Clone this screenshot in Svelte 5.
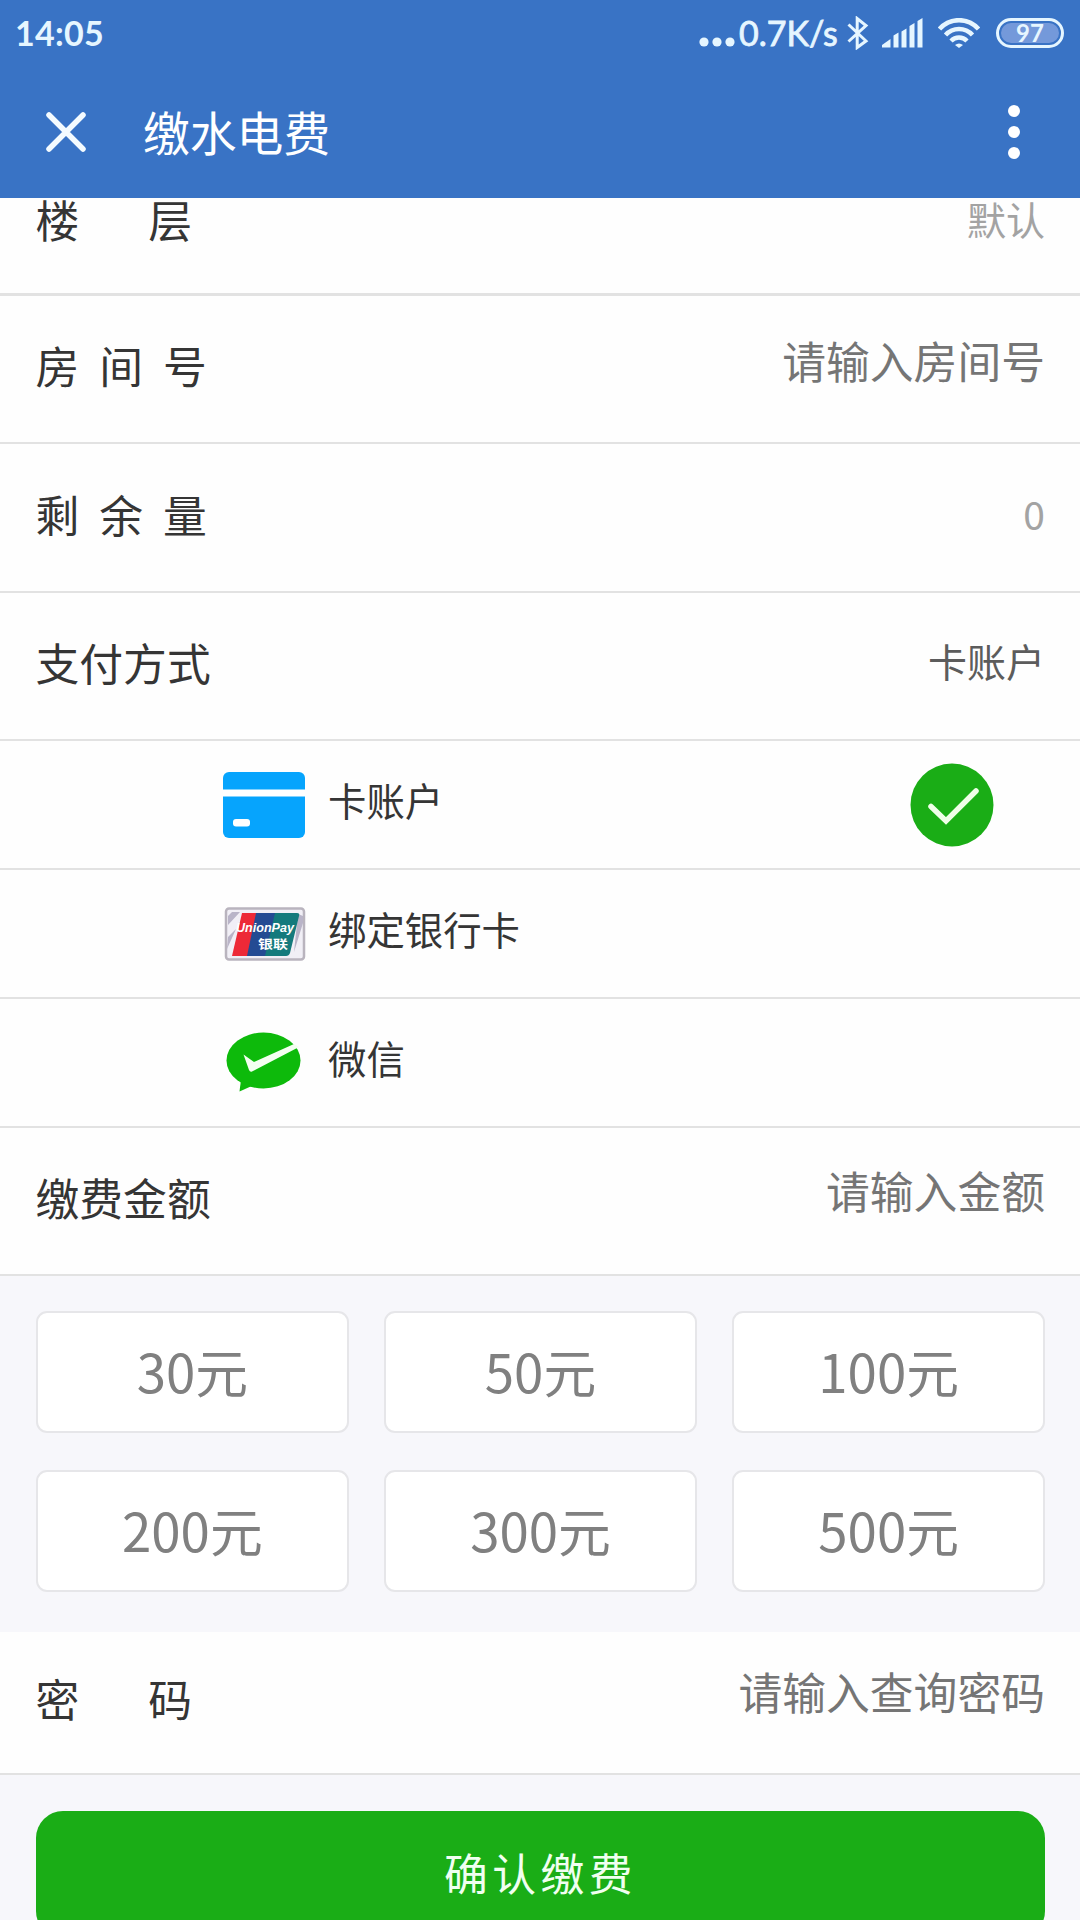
<script>
  const amounts = [30, 50, 100, 200, 300, 500];
</script>

<div class="screen">
  <header>
    <div class="status">
      <span class="time">14:05</span>
      <span class="net">
        <svg class="dots" width="36" height="30" viewBox="0 0 36 30" fill="currentColor">
          <circle cx="5" cy="24" r="4.6" /><circle cx="18" cy="24" r="4.6" /><circle cx="31" cy="24" r="4.6" />
        </svg>
        <span class="speed">0.7K/s</span>
        <svg class="bt" width="22" height="34" viewBox="0 0 22 34" fill="none" stroke="currentColor" stroke-width="3">
          <path d="M1.500 8.500 19 25 10.200 31.500V2.500L19 9.500 1.500 25.500" />
        </svg>
        <svg class="signal" width="41" height="30" viewBox="0 0 41 30" fill="currentColor">
          <path d="M0 29.500V27L8.500 21v8.500z" />
          <path d="M11.500 17.500l5-3v15h-5zM19.500 13.500l5-3v19h-5zM27.500 8l5-3v24.500h-5zM35.500 3l5-3v29.500h-5z" />
        </svg>
        <svg class="wifi" width="42" height="30" viewBox="0 0 42 30" fill="none" stroke="currentColor" stroke-width="4.500">
          <path d="M1.500 11C12-.8 30-.8 40.500 11M7.500 17C15 9 27 9 34.500 17M13 23C17.500 18.400 24.500 18.400 29 23" />
          <path d="M17 27Q21 23.800 25 27L21 30z" fill="currentColor" stroke="none" />
        </svg>
        <span class="battery"><span>97</span></span>
      </span>
    </div>
    <div class="titlebar">
      <svg width="40" height="40" viewBox="0 0 40 40" stroke="#f4fbff" stroke-width="5.500" stroke-linecap="round">
        <path d="M3 3 37 37M37 3 3 37" />
      </svg>
      <h1>缴水电费</h1>
      <svg class="more" width="14" height="54" viewBox="0 0 14 54" fill="#fff">
        <circle cx="7" cy="6" r="6" /><circle cx="7" cy="27" r="6" /><circle cx="7" cy="48" r="6" />
      </svg>
    </div>
  </header>

  <div class="row floor">
    <span class="label two"><i>楼</i><i>层</i></span>
    <span class="value light">默认</span>
  </div>
  <div class="row">
    <span class="label three">房间号</span>
    <span class="value hint">请输入房间号</span>
  </div>
  <div class="row">
    <span class="label three">剩余量</span>
    <span class="value light">0</span>
  </div>
  <div class="row">
    <span class="label">支付方式</span>
    <span class="value chosen">卡账户</span>
  </div>

  <div class="option">
    <svg width="84" height="68" viewBox="0 0 84 68">
      <rect x="1" y="1" width="82" height="66" rx="6" fill="#06a4fd" />
      <path d="M1 18.500h82v7H1z" fill="#fff" />
      <rect x="11" y="48" width="17" height="7.500" rx="3" fill="#fff" />
    </svg>
    <span>卡账户</span>
    <svg class="tick" width="84" height="84" viewBox="0 0 84 84">
      <circle cx="42" cy="42" r="41.500" fill="#1aad16" />
      <path d="M21 43.500 36 58 66 28" fill="none" stroke="#efffe8" stroke-width="5.500" stroke-linecap="round" />
    </svg>
  </div>
  <div class="option">
    <svg width="84" height="54" viewBox="0 0 84 54">
      <rect x="4" y="1.500" width="78" height="51" rx="3" fill="#f1eff6" stroke="#b9b4be" stroke-width="2.500" />
      <path d="M6 18 18 5h-8l-4 4zM5 42l9-20-8 8zM72 45l9-29v-7l-5-2z" fill="#b9b4c8" />
      <path d="M20 6h20L31 49H10z" fill="#ed2937" />
      <path d="M34 6h24L47 49H25z" fill="#244b93" />
      <path d="M53 6h22q3 0 2 3l-9 37q-1 3-4 3H43z" fill="#147a7c" />
      <text x="14" y="24.500" class="pay-en" textLength="58" lengthAdjust="spacingAndGlyphs">UnionPay</text>
      <text x="36" y="42" class="pay-cn" textLength="30" lengthAdjust="spacingAndGlyphs">银联</text>
    </svg>
    <span>绑定银行卡</span>
  </div>
  <div class="option">
    <svg width="84" height="60" viewBox="0 0 84 60">
      <ellipse cx="41.500" cy="28.500" rx="37" ry="28" fill="#0dba0b" />
      <path d="M19 48 17.500 59.500 32 53z" fill="#0dba0b" />
      <path d="M21.500 22.500 32 30 72 12 77 15 30 39.500q-2 .8-3-1.500z" fill="#f4fff1" />
    </svg>
    <span>微信</span>
  </div>

  <div class="row">
    <span class="label">缴费金额</span>
    <span class="value hint raised">请输入金额</span>
  </div>
  <div class="amounts">
    {#each amounts as amount}
      <button>{amount}元</button>
    {/each}
  </div>
  <div class="row password">
    <span class="label two"><i>密</i><i>码</i></span>
    <span class="value hint raised">请输入查询密码</span>
  </div>
  <div class="footer">
    <button class="submit">确认缴费</button>
  </div>
</div>

<style>
  :global(body) {
    overflow: hidden;
  }
  .screen {
    width: 1080px;
    height: 1920px;
    overflow: hidden;
    display: flex;
    flex-direction: column;
    background: #f7f7fb;
    color: #353535;
    font-family: "Noto Sans CJK SC", sans-serif;
  }
  .screen > * {
    flex-shrink: 0;
    box-sizing: border-box;
  }
  header {
    height: 198px;
    background: #3973c5;
    color: #e6f6ff;
  }
  .status {
    height: 66px;
    display: flex;
    align-items: center;
    justify-content: space-between;
    padding: 0 16px 0 15px;
    font: 700 34px/66px Lato, sans-serif;
  }
  .time {
    letter-spacing: 0.3px;
  }
  .net {
    display: flex;
    align-items: center;
  }
  .speed {
    width: 100px;
    margin-left: 4px;
    white-space: nowrap;
    font-weight: 400;
    -webkit-text-stroke: 0.8px currentColor;
  }
  .bt {
    margin-left: 8px;
  }
  .signal {
    margin-left: 13px;
  }
  .wifi {
    margin-left: 15px;
  }
  .battery {
    box-sizing: border-box;
    width: 68px;
    height: 30px;
    margin-left: 16px;
    padding: 2px;
    border: 3px solid currentColor;
    border-radius: 15px;
  }
  .battery span {
    display: block;
    height: 20px;
    border-radius: 10px;
    background: #7499da;
    text-align: center;
    font-size: 24px;
    line-height: 20px;
  }
  .titlebar {
    height: 132px;
    display: flex;
    align-items: center;
    padding: 0 59px 0 46px;
  }
  .titlebar > svg {
    margin-bottom: 1px;
  }
  h1 {
    margin: 0 auto 2px 57px;
    color: #fff;
    font-size: 46.800px;
    font-weight: 400;
    line-height: 130px;
  }
  .row {
    height: 148.400px;
    display: flex;
    align-items: center;
    justify-content: space-between;
    padding: 0 35px 0 35.500px;
    border-bottom: 2px solid #e2e2e2;
    background: #fefefe;
  }
  .floor {
    height: 98px;
    padding-bottom: 46px;
    border-bottom-width: 3px;
  }
  .label {
    margin-bottom: 8px;
    font-size: 43.800px;
    line-height: 64px;
  }
  .label i {
    font-style: normal;
  }
  .two {
    display: flex;
    gap: 69px;
  }
  .three {
    letter-spacing: 20px;
  }
  .value {
    margin-bottom: 9px;
    font-size: 39px;
    line-height: 56px;
  }
  .light {
    color: #a3a3a3;
  }
  .chosen {
    margin-bottom: 11px;
    color: #5c5c5c;
  }
  .hint {
    margin-bottom: 18px;
    color: #757575;
    font-size: 43.800px;
  }
  .raised {
    margin-bottom: 22px;
  }
  .option {
    height: 128.900px;
    display: flex;
    align-items: center;
    gap: 22px;
    padding: 0 86px 0 222px;
    border-bottom: 2px solid #e2e2e2;
    background: #fefefe;
    font-size: 38.400px;
    line-height: 56px;
  }
  .option span {
    margin-bottom: 11px;
  }
  .tick {
    margin-left: auto;
  }
  .pay-en {
    fill: #fff;
    font: italic 700 13px "Liberation Sans", sans-serif;
  }
  .pay-cn {
    fill: #fff;
    font-size: 12px;
    font-weight: 700;
  }
  .amounts {
    height: 355.500px;
    display: grid;
    grid-template-columns: repeat(3, 1fr);
    grid-auto-rows: 122px;
    gap: 37px 35.500px;
    padding: 35px 35px 0 36px;
  }
  button {
    padding: 0;
    font-family: inherit;
  }
  .amounts button {
    padding-bottom: 5px;
    border: 2px solid #e6e6e9;
    border-radius: 11px;
    background: #fff;
    color: #808080;
    font-size: 52.800px;
    line-height: 76px;
  }
  .password {
    height: 143px;
  }
  .footer {
    padding: 36px 35px 0 36px;
  }
  .submit {
    width: 100%;
    height: 127px;
    padding-bottom: 5px;
    border: 0;
    border-radius: 27px;
    background: #1aad16;
    color: #f0fff0;
    font-size: 43.800px;
    letter-spacing: 4.500px;
  }
</style>
